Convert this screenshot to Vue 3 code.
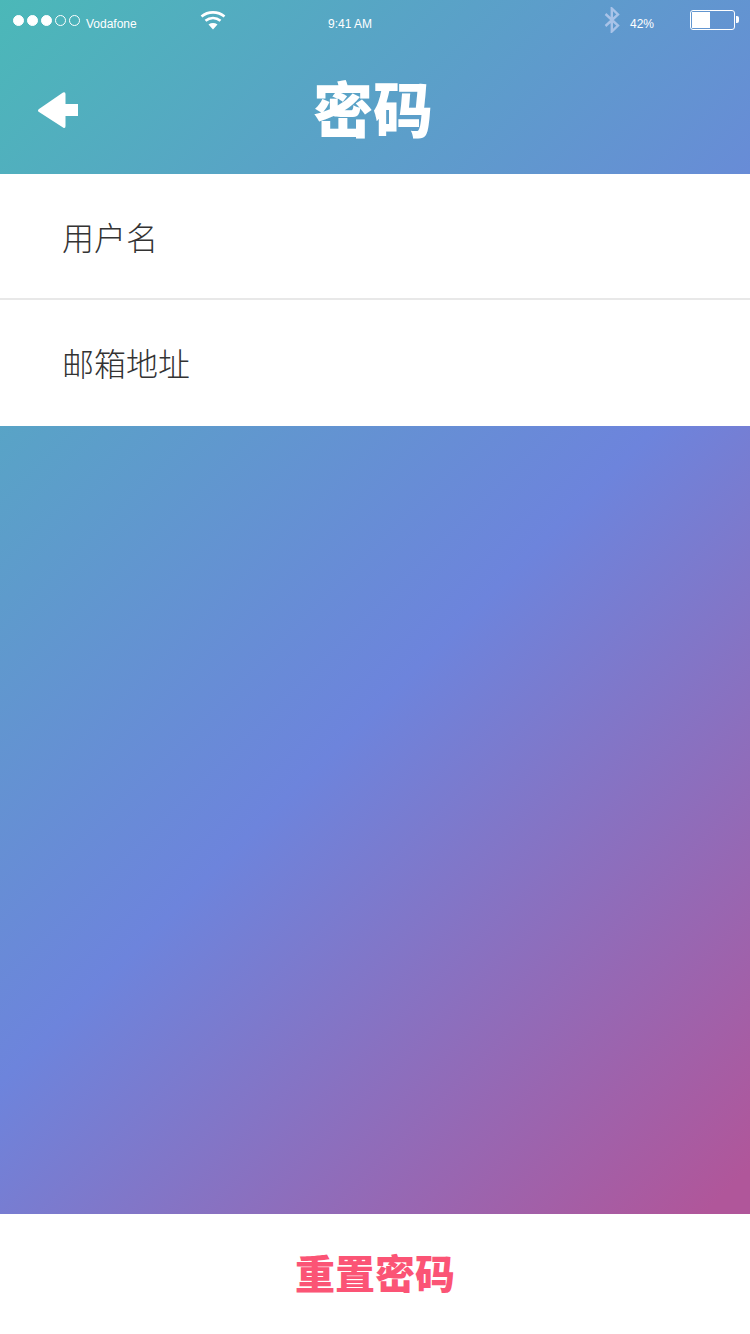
<script setup>
const dots = [true, true, true, false, false]
</script>

<template>
  <div class="page">
    <header class="top">
      <div class="status">
        <div class="left">
          <div class="dots">
            <i v-for="(d, n) in dots" :key="n" class="dot" :class="{ on: d }"></i>
          </div>
          <span class="carrier">Vodafone</span>
          <svg class="wifi" width="26" height="20" viewBox="0 0 26 20">
            <path d="M1.5 6.5C8 1 18 1 24.5 6.5M5.5 10.8C10 7 16 7 20.5 10.8" fill="none" stroke="#fff" stroke-width="2.6"/>
            <path d="M8.5 14.5C11.5 12.6 14.500 12.600 17.500 14.500L13 19.500Z" fill="#fff"/>
          </svg>
        </div>
        <span class="time">9:41 AM</span>
        <div class="right">
          <svg class="bt" width="18" height="26" viewBox="0 0 18 26">
            <path d="M2.500 7L15 18.500L8.800 24.500V1.500L15 7.500L2.500 19" fill="none" stroke="#a9c3e8" stroke-width="2.400"/>
          </svg>
          <span class="pct">42%</span>
          <div class="battery"><div class="level"></div></div>
        </div>
      </div>
      <div class="nav">
        <svg class="back" width="42" height="38" viewBox="0 0 42 38">
          <path d="M1 19.500Q1 18.500 2 18L26 1.500Q28.500 0.500 28.500 3V13H41V25H28.500V35Q28.500 38 26 36.500L2 21Q1 20.500 1 19.500Z" fill="#fff"/>
        </svg>
        <h1 class="title">密码</h1>
      </div>
    </header>

    <section class="form">
      <div class="row first">用户名</div>
      <div class="row last">邮箱地址</div>
    </section>

    <div class="spacer"></div>

    <footer class="foot">重置密码</footer>
  </div>
</template>

<style scoped>
.page {
  width: 750px;
  height: 1334px;
  display: flex;
  flex-direction: column;
  background: linear-gradient(135deg, #4bb8b8 0%, #6d84dc 52%, #b0569a 92%);
  font-family: "Liberation Sans", "Noto Sans CJK SC", sans-serif;
  overflow: hidden;
}
.top {
  height: 174px;
  flex: none;
  color: #fff;
}
.status {
  height: 40px;
  position: relative;
  display: flex;
  align-items: flex-start;
  justify-content: space-between;
}
.left {
  display: flex;
  align-items: flex-start;
  padding-left: 13px;
}
.dots {
  display: flex;
  gap: 3px;
  padding-top: 15px;
}
.dot {
  display: block;
  width: 11px;
  height: 11px;
  box-sizing: border-box;
  border: 1px solid #fff;
  border-radius: 50%;
}
.dot.on {
  background: #fff;
}
.carrier {
  margin-left: 6px;
  padding-top: 16px;
  font-size: 12px;
  line-height: 16px;
}
.wifi {
  margin-left: 63px;
  margin-top: 10px;
}
.time {
  position: absolute;
  left: 328px;
  top: 16px;
  font-size: 12px;
  line-height: 16px;
}
.right {
  display: flex;
  align-items: flex-start;
  padding-right: 15px;
}
.bt {
  margin-top: 7px;
}
.pct {
  margin-left: 9px;
  margin-top: 16px;
  font-size: 12px;
  line-height: 16px;
}
.battery {
  margin-left: 36px;
  margin-top: 10px;
  width: 45px;
  height: 20px;
  box-sizing: border-box;
  border: 1px solid #fff;
  border-radius: 3px;
  padding: 1px;
  position: relative;
}
.battery::after {
  content: "";
  position: absolute;
  right: -5px;
  top: 5px;
  width: 3px;
  height: 7px;
  background: #fff;
  border-radius: 0 2px 2px 0;
}
.level {
  width: 18px;
  height: 16px;
  background: #fff;
}
.nav {
  position: relative;
  height: 134px;
  display: flex;
  justify-content: center;
}
.back {
  position: absolute;
  left: 37px;
  top: 51px;
}
.title {
  margin: 33px 0 0;
  padding-right: 4px;
  font-size: 60px;
  line-height: 80px;
  font-weight: 900;
  color: #fff;
}
.form {
  flex: none;
  background: #fff;
}
.row {
  height: 126px;
  box-sizing: border-box;
  padding-left: 62px;
  display: flex;
  align-items: center;
  font-size: 32px;
  font-weight: 300;
  color: #333;
}
.first {
  border-bottom: 2px solid #e8e8e8;
}
.last {
  padding-bottom: 2px;
}
.spacer {
  flex: 1;
}
.foot {
  flex: none;
  height: 120px;
  padding-bottom: 4px;
  box-sizing: border-box;
  background: #fff;
  display: flex;
  align-items: center;
  justify-content: center;
  font-size: 40px;
  font-weight: 900;
  color: #fb5475;
}
</style>
